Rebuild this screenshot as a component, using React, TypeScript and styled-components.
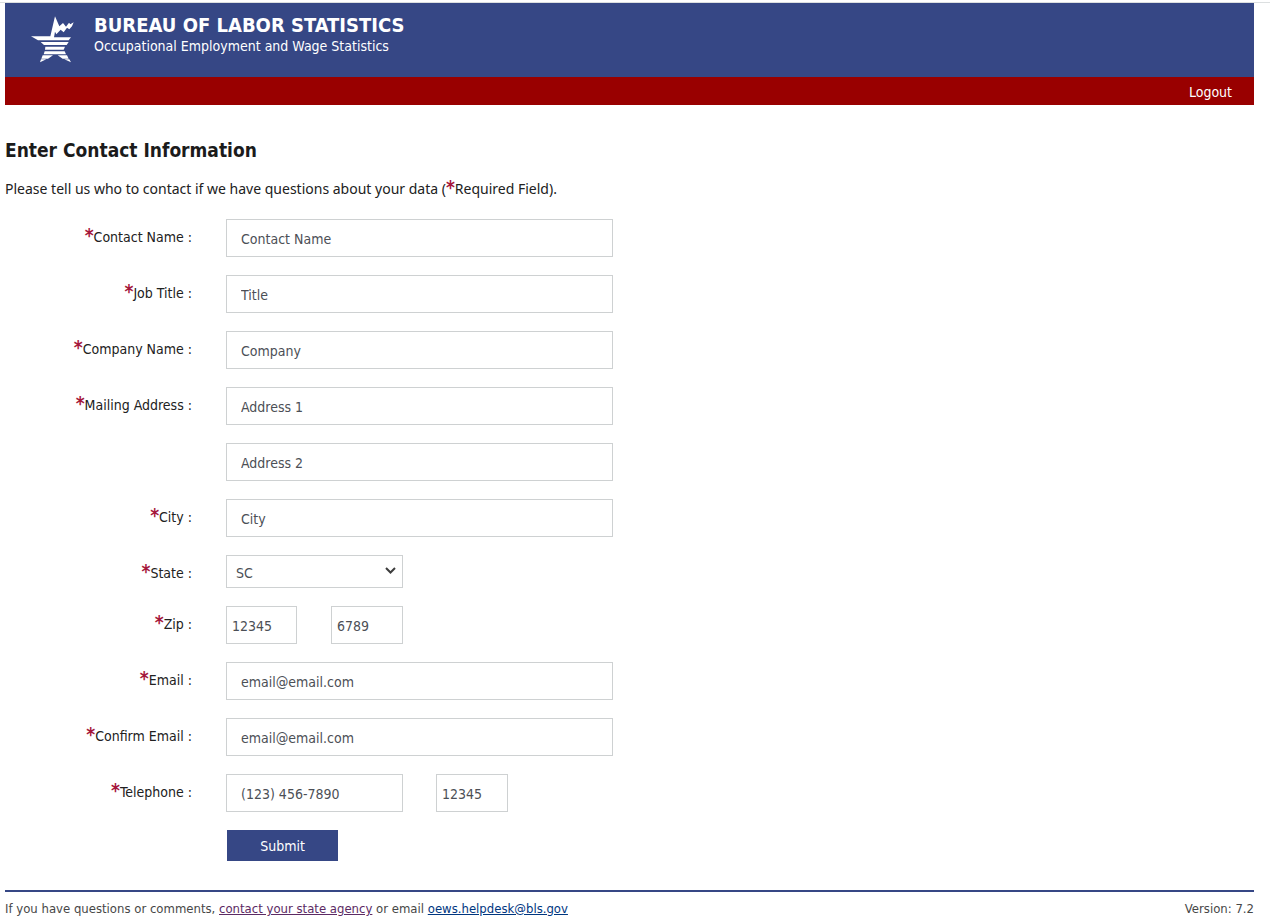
import React from 'react';
import styled, { createGlobalStyle } from 'styled-components';

const navy = '#364785';
const prose = "Tahoma, 'Noto Sans', sans-serif";

const Global = createGlobalStyle`
  * { box-sizing: border-box; }
  body { margin: 0; background: #fff; color: #212121; }
  body, input, select, button {
    font-family: Tahoma, 'DejaVu Sans Condensed', sans-serif;
    font-size: 14px;
  }
`;

const Page = styled.div`
  border-top: 1px solid #dcdfe0;
  margin-top: 2px;
`;
const Content = styled.div`
  padding: 0 16px 0 5px;
`;
const Banner = styled.header`
  display: flex;
  align-items: flex-start;
  gap: 4px;
  height: 74px;
  padding: 2px 0 0 15px;
  background: ${navy};
  color: #fff;
`;
const Agency = styled.div`
  padding-top: 8px;
`;
const AgencyName = styled.div`
  font-size: 20px;
  font-weight: 700;
  line-height: 24px;
`;
const Program = styled.div`
  line-height: 18px;
`;
const Bar = styled.nav`
  display: flex;
  justify-content: flex-end;
  align-items: center;
  height: 28px;
  padding: 2px 22px 0 0;
  background: #990000;
`;
const BarLink = styled.a`
  color: #fff;
  text-decoration: none;
  line-height: 20px;
`;
const Heading = styled.h1`
  margin: 32px 0 0;
  font-size: 19px;
  line-height: 26px;
  color: #1b1b1b;
`;
const Intro = styled.p`
  margin: 16px 0 20px;
  font-family: ${prose};
  line-height: 20px;
`;
const Star = styled.span`
  color: #a5173c;
  font-family: Tahoma, 'DejaVu Sans Condensed', sans-serif;
  font-size: 19px;
  font-weight: 700;
  line-height: 0;
`;
const Form = styled.form`
  display: grid;
  gap: 18px;
`;
const Row = styled.div`
  display: grid;
  grid-template-columns: 187px minmax(0, 387px);
  column-gap: 34px;
`;
const Label = styled.label`
  padding-top: 8px;
  line-height: 20px;
  text-align: right;
`;
const Fields = styled.div<{ $gap?: number }>`
  grid-column: 2;
  display: flex;
  gap: ${(p) => p.$gap ?? 34}px;
`;
const Input = styled.input<{ $width?: number; $tight?: boolean }>`
  width: ${(p) => (p.$width ? `${p.$width}px` : '100%')};
  height: 38px;
  padding: 2px ${(p) => (p.$tight ? 5 : 14)}px 0;
  border: 1px solid #ced1d2;
  border-radius: 0;
  background: #fff;
  color: #4c4f56;
`;
const SelectBox = styled.div`
  position: relative;
  width: 177px;
`;
const Select = styled.select`
  appearance: none;
  display: block;
  width: 100%;
  height: 33px;
  padding: 3px 9px 0;
  border: 1px solid #ced1d2;
  border-radius: 0;
  background: #fff;
  color: #4c4f56;
`;
const Chevron = styled.svg`
  position: absolute;
  right: 6px;
  top: 12px;
  pointer-events: none;
`;
const Submit = styled.button`
  width: 111px;
  height: 31px;
  margin-left: 1px;
  padding: 0;
  border: 0;
  background: ${navy};
  color: #fff;
`;
const Footer = styled.footer`
  display: flex;
  justify-content: space-between;
  margin-top: 29px;
  padding-top: 10px;
  border-top: 2px solid ${navy};
  font-size: 13px;
  line-height: 14px;
  color: #474747;
`;
const FootLink = styled.a<{ $visited?: boolean }>`
  color: ${(p) => (p.$visited ? '#5c2a64' : '#00367f')};
`;

const Logo = () => (
  <svg width="70" height="65" viewBox="0 0 210 195" aria-hidden="true">
    <path
      fill="#fff"
      d="M33 94H91L105 34L118 64L129 54L138 65L147 53L151 58L161 52L156 64L148 73L141 68L131 82L122 74L109 88L105 80L102 97H153L146 106H54Z"
    />
    <path fill="#fff" d="M62 111H146L140 120H72ZM76 125H135L131 134H75ZM74 139H134L138 148H71ZM68 151H99L84 161H64ZM113 151H141L146 161H128ZM63 163H79L60 172ZM133 163H148L153 172Z" />
  </svg>
);

type RowProps = { id?: string; label?: string; gap?: number; children: React.ReactNode };
const Field = ({ id, label, gap, children }: RowProps) => (
  <Row>
    {label && (
      <Label htmlFor={id}>
        <Star>*</Star>{label} :
      </Label>
    )}
    <Fields $gap={gap}>{children}</Fields>
  </Row>
);

export default function App() {
  return (
    <Page>
      <Global />
      <Content>
        <Banner>
          <Logo />
          <Agency>
            <AgencyName>BUREAU OF LABOR STATISTICS</AgencyName>
            <Program>Occupational Employment and Wage Statistics</Program>
          </Agency>
        </Banner>
        <Bar><BarLink href="#logout">Logout</BarLink></Bar>
        <main>
          <Heading>Enter Contact Information</Heading>
          <Intro>
            Please tell us who to contact if we have questions about your data (<Star>*</Star>Required Field).
          </Intro>
          <Form onSubmit={(e) => e.preventDefault()}>
            <Field id="name" label="Contact Name"><Input id="name" defaultValue="Contact Name" /></Field>
            <Field id="title" label="Job Title"><Input id="title" defaultValue="Title" /></Field>
            <Field id="company" label="Company Name"><Input id="company" defaultValue="Company" /></Field>
            <Field id="address1" label="Mailing Address"><Input id="address1" defaultValue="Address 1" /></Field>
            <Field><Input aria-label="Mailing address, line 2" defaultValue="Address 2" /></Field>
            <Field id="city" label="City"><Input id="city" defaultValue="City" /></Field>
            <Field id="state" label="State">
              <SelectBox>
                <Select id="state" defaultValue="SC"><option>SC</option></Select>
                <Chevron width="12" height="8" viewBox="0 0 12 8">
                  <path d="M1 1L5.500 5.500L10 1" fill="none" stroke="#3d3d3d" strokeWidth="2" />
                </Chevron>
              </SelectBox>
            </Field>
            <Field id="zip" label="Zip">
              <Input id="zip" $width={71} $tight defaultValue="12345" />
              <Input aria-label="Zip extension" $width={72} $tight defaultValue="6789" />
            </Field>
            <Field id="email" label="Email"><Input id="email" type="email" defaultValue="email@email.com" /></Field>
            <Field id="confirm" label="Confirm Email"><Input id="confirm" type="email" defaultValue="email@email.com" /></Field>
            <Field id="phone" label="Telephone" gap={33}>
              <Input id="phone" type="tel" $width={177} defaultValue="(123) 456-7890" />
              <Input aria-label="Telephone extension" $width={72} $tight defaultValue="12345" />
            </Field>
            <Field><Submit type="submit">Submit</Submit></Field>
          </Form>
        </main>
        <Footer>
          <div>
            If you have questions or comments, <FootLink $visited href="#agency">contact your state agency</FootLink> or email{' '}
            <FootLink href="mailto:oews.helpdesk@bls.gov">oews.helpdesk@bls.gov</FootLink>
          </div>
          <div>Version: 7.2</div>
        </Footer>
      </Content>
    </Page>
  );
}
